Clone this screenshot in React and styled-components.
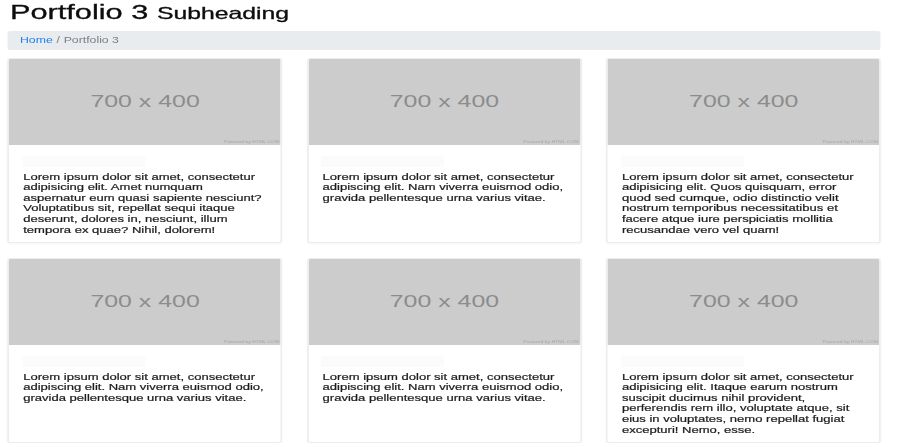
import React from "react";
import styled, { createGlobalStyle } from "styled-components";

// the reference is a narrow page stretched 1.5x horizontally,
// so the page is laid out at 600px and scaled on x only
const GlobalStyle = createGlobalStyle`
  html, body {
    margin: 0;
    padding: 0;
    background: #ffffff;
    overflow: hidden;
  }
  body {
    font-family: "Liberation Sans", Arial, sans-serif;
    color: #212529;
  }
`;

const Page = styled.div`
  width: 600px;
  box-sizing: border-box;
  padding: 0 12.7px 0 5.3px;
  transform: scaleX(1.5);
  transform-origin: 0 0;
`;

const Heading = styled.h1`
  margin: 0;
  font-size: 20.5px;
  font-weight: 400;
  line-height: 24px;
  color: #0d0d0d;
  padding-left: 1.3px;
  -webkit-text-stroke: 0.3px #0d0d0d;

  small {
    font-size: 16.5px;
  }
`;

const Crumbs = styled.ol`
  list-style: none;
  margin: 6px 0 0;
  padding: 0 8px;
  height: 19px;
  display: flex;
  align-items: center;
  gap: 2.5px;
  background: #e9ecef;
  border-radius: 2px;
  font-size: 8.2px;
  color: #7a7f85;
`;

const CrumbLink = styled.a`
  color: #1a7ff0;
  text-decoration: none;
`;

const Grid = styled.div`
  margin-top: 8px;
  display: grid;
  grid-template-columns: repeat(3, 1fr);
  column-gap: 16.7px;
  row-gap: 15px;
`;

const Card = styled.div`
  height: 185px;
  box-sizing: border-box;
  display: flex;
  flex-direction: column;
  border: 1px solid rgba(0, 0, 0, 0.07);
  border-radius: 2px;
  box-shadow: 0 1px 2px rgba(0, 0, 0, 0.04);
  overflow: hidden;
  background: #fff;
`;

const Placeholder = styled.div`
  height: 86px;
  flex: none;
  display: flex;
  align-items: center;
  justify-content: center;
  background: #cccccc;
  color: #8c8c8c;
  font-size: 16.6px;
  position: relative;
`;

const Powered = styled.span`
  position: absolute;
  right: 1px;
  bottom: 1px;
  font-size: 3.4px;
  color: #a6a6a6;
  line-height: 1;
`;

const Body = styled.div`
  padding: 11px 9.2px 8px;
`;

const TitleBar = styled.div`
  width: 82px;
  height: 11px;
  margin-left: -0.7px;
  margin-bottom: 4.7px;
  background: #fbfbfb;
`;

const Text = styled.p`
  margin: 0;
  font-size: 8.7px;
  line-height: 10.6px;
  font-weight: 400;
  color: #1e1e1e;
  -webkit-text-stroke: 0.2px #1e1e1e;
`;

const items = [
  "Lorem ipsum dolor sit amet, consectetur adipisicing elit. Amet numquam aspernatur eum quasi sapiente nesciunt? Voluptatibus sit, repellat sequi itaque deserunt, dolores in, nesciunt, illum tempora ex quae? Nihil, dolorem!",
  "Lorem ipsum dolor sit amet, consectetur adipiscing elit. Nam viverra euismod odio, gravida pellentesque urna varius vitae.",
  "Lorem ipsum dolor sit amet, consectetur adipisicing elit. Quos quisquam, error quod sed cumque, odio distinctio velit nostrum temporibus necessitatibus et facere atque iure perspiciatis mollitia recusandae vero vel quam!",
  "Lorem ipsum dolor sit amet, consectetur adipiscing elit. Nam viverra euismod odio, gravida pellentesque urna varius vitae.",
  "Lorem ipsum dolor sit amet, consectetur adipiscing elit. Nam viverra euismod odio, gravida pellentesque urna varius vitae.",
  "Lorem ipsum dolor sit amet, consectetur adipisicing elit. Itaque earum nostrum suscipit ducimus nihil provident, perferendis rem illo, voluptate atque, sit eius in voluptates, nemo repellat fugiat excepturi! Nemo, esse.",
];

const App = () => {
  return (
    <Page>
      <GlobalStyle />
      <Heading>
        Portfolio 3 <small>Subheading</small>
      </Heading>
      <Crumbs>
        <li>
          <CrumbLink href="#">Home</CrumbLink>
        </li>
        <li>/</li>
        <li>Portfolio 3</li>
      </Crumbs>
      <Grid>
        {items.map((text, i) => (
          <Card key={i}>
            <Placeholder>
              700 x 400
              <Powered>Powered by HTML.COM</Powered>
            </Placeholder>
            <Body>
              <TitleBar />
              <Text>{text}</Text>
            </Body>
          </Card>
        ))}
      </Grid>
    </Page>
  );
};

export default App;
